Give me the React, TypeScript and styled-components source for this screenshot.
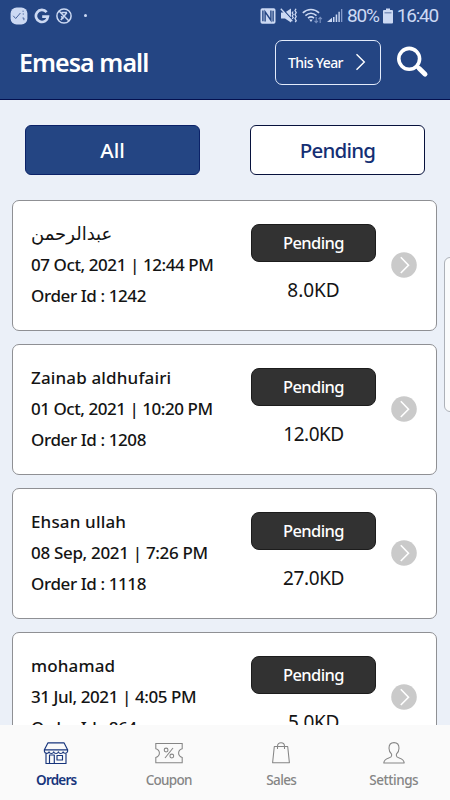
import React from "react";
import styled, { createGlobalStyle } from "styled-components";

const GlobalStyle = createGlobalStyle`
  * { box-sizing: border-box; }
  body { margin: 0; background: #ebf0f8; }
  button { font: inherit; margin: 0; padding: 0; }
`;

const Screen = styled.div`
  position: relative;
  width: 450px;
  height: 800px;
  display: flex;
  flex-direction: column;
  overflow: hidden;
  background: #ebf0f8;
  color: #141414;
  font-family: "Noto Sans", "DejaVu Sans", sans-serif;
  font-weight: 500;
`;

const Text = styled.span<{ $track?: number }>`
  white-space: nowrap;
  letter-spacing: ${(p) => p.$track ?? 0}px;
`;

const ArabicText = styled.span`
  font-family: "DejaVu Sans", sans-serif;
  font-size: 18px;
  font-weight: 400;
  white-space: nowrap;
`;

const Header = styled.header`
  flex: none;
  height: 100px;
  background: #244583;
  border-bottom: 1px solid #04104f;
  color: #fff;
`;

const StatusBar = styled.div`
  height: 31px;
  padding: 0 12px 0 10px;
  display: flex;
  align-items: center;
  justify-content: space-between;
  color: #ccd9f3;
  font-family: Roboto, sans-serif;
  font-weight: 400;
  font-size: 19px;
  line-height: 31px;
`;

const StatusGroup = styled.div`
  display: flex;
  align-items: center;
  svg { display: block; flex: none; }
`;

const TitleBar = styled.div`
  height: 62px;
  padding: 0 21px 0 19px;
  display: flex;
  align-items: center;
`;

const Title = styled.h1`
  flex: 1;
  margin: 0;
  font-size: 25px;
  font-weight: 600;
  line-height: 34px;
`;

const YearButton = styled.button`
  width: 106px;
  height: 45px;
  margin-right: 15px;
  padding: 0 14px 0 12px;
  display: flex;
  align-items: center;
  justify-content: space-between;
  border: 1px solid #e3ebfb;
  border-radius: 7px;
  background: transparent;
  color: #fff;
  font-size: 14px;
  font-weight: 500;
`;

const Tabs = styled.div`
  flex: none;
  height: 100px;
  padding: 25px 25px 0;
  display: flex;
  justify-content: space-between;
`;

const Tab = styled.button<{ $active?: boolean }>`
  width: 175px;
  height: 50px;
  border: 1px solid ${(p) => (p.$active ? "#0b2268" : "#07123d")};
  border-radius: 6px;
  background: ${(p) => (p.$active ? "#244583" : "#fff")};
  color: ${(p) => (p.$active ? "#fff" : "#142f74")};
  font-size: 20.5px;
  font-weight: 500;
  line-height: 48px;
`;

const OrderList = styled.main`
  flex: 1;
  min-height: 0;
  overflow: hidden;
  padding: 0 13px 0 12px;
`;

const Card = styled.article`
  height: 131px;
  margin-bottom: 13px;
  padding: 0 19px 0 18px;
  display: flex;
  border: 1px solid #8f9094;
  border-radius: 7px;
  background: #fff;
`;

const Details = styled.div`
  flex: 1;
  padding-top: 17px;
  display: flex;
  flex-direction: column;
  align-items: flex-start;
  font-size: 17px;
  line-height: 31.2px;
`;

const Amount = styled.div`
  width: 125px;
  margin-right: 15px;
  padding-top: 23px;
  display: flex;
  flex-direction: column;
  align-items: center;
  font-size: 19px;
  font-weight: 400;
  line-height: 30px;
`;

const Badge = styled.div`
  width: 125px;
  height: 38px;
  margin-bottom: 13px;
  border: 1px solid #1c1c1c;
  border-radius: 8px;
  background: #323232;
  color: #fff;
  text-align: center;
  font-size: 16.5px;
  font-weight: 500;
  line-height: 36px;
`;

const Open = styled.div`
  width: 26px;
  padding-bottom: 1px;
  display: flex;
  align-items: center;
`;

const BottomNav = styled.nav`
  flex: none;
  height: 75px;
  display: grid;
  grid-template-columns: repeat(4, 1fr);
  background: #fafafa;
`;

const NavItem = styled.div<{ $active?: boolean }>`
  padding-top: 16px;
  display: flex;
  flex-direction: column;
  align-items: center;
  gap: 5px;
  color: ${(p) => (p.$active ? "#17357c" : "#858585")};
  font-size: 13.5px;
  font-weight: ${(p) => (p.$active ? 600 : 500)};
  line-height: 20px;
  svg { display: block; }
`;

const EdgeHandle = styled.div`
  position: absolute;
  top: 257px;
  right: -8px;
  width: 14px;
  height: 155px;
  border: 1px solid #adb1b8;
  border-radius: 6px;
  background: #fafbfc;
`;

const AppNoticeIcon = () => (
  <svg width="18" height="18" viewBox="0 0 18 18">
    <rect x=".6" y=".6" width="16.8" height="16.8" rx="6" fill="#ccd9f3" />
    <path d="M3.2 8.8l2.5 2.7L10.4 6M12.5 4.2h1.2M12.7 7h1.2M12.5 11h1.4v2.2" fill="none" stroke="#47639d" strokeWidth="1" />
  </svg>
);

const GoogleIcon = () => (
  <svg width="16" height="16" viewBox="0 0 16 16">
    <path d="M12.6 4.2A6 6 0 1 0 13.9 8.6H8.2" fill="none" stroke="#ccd9f3" strokeWidth="2.7" />
  </svg>
);

const BlockedIcon = () => (
  <svg width="16" height="16" viewBox="0 0 16 16" fill="none" stroke="#ccd9f3" strokeWidth="1.5">
    <circle cx="8" cy="8" r="7.1" />
    <path d="M3 3l10 10M11 4.6L4.8 12M5.5 4.600h5.5M5.2 8.2l2.2 2.6" />
  </svg>
);

const NfcIcon = () => (
  <svg width="16" height="16" viewBox="0 0 16 16">
    <rect x=".5" y=".3" width="15" height="15.4" rx="1.8" fill="#ccd9f3" />
    <path d="M5.1 13.500V3.800l5.800 8.400V2.500M2.900 2.500v10.800M13.100 2.700v10.800" fill="none" stroke="#244583" strokeWidth="1.4" />
  </svg>
);

const MuteIcon = () => (
  <svg width="18" height="17" viewBox="0 0 18 17" fill="none" stroke="#ccd9f3">
    <path d="M1 5.500h4L11 1.500v14L5 11.500H1z" fill="#ccd9f3" stroke="none" />
    <path d="M1.800 1.200l10.500 11.500" stroke="#244583" strokeWidth="1.300" />
    <path d="M.8 1.800l11.500 12.500" strokeWidth="1.300" />
    <path d="M13.200 4.500l-1 1.500 1 1.500-1 1.500 1 1.500-1 1.500M16 1.800l-1 1.800 1.200 2-1.200 2 1.200 2-1.200 2 1.200 2-1 1.400" strokeWidth="1.300" />
  </svg>
);

const WifiIcon = () => (
  <svg width="21" height="16" viewBox="0 0 21 16" fill="none" stroke="#ccd9f3" strokeWidth="1.6">
    <path d="M.8 4.8c4.8-4.4 11.5-4.4 16.3 0M3.4 7.6c3.5-3 7.6-3 11.1 0M6 10.2c1.9-1.6 4.1-1.6 6 0" />
    <path d="M7.2 11.5h3.5L9 14z" fill="#ccd9f3" stroke="none" />
    <path d="M14.2 9v5.5M12.5 12.8l1.7 1.8 1.7-1.8M18.2 15V9.4M16.5 11.2l1.7-1.8 1.7 1.8" stroke="#7890c0" strokeWidth="1.1" />
  </svg>
);

const SignalIcon = () => (
  <svg width="16" height="15" viewBox="0 0 16 15">
    <path d="M0 14l5-4.2V14z" fill="#ccd9f3" />
    <path d="M6 14V9h1.5v5zM8.7 14V6.5h1.5V14z" fill="#ccd9f3" />
    <path d="M11.4 14V3.8h1.4V14z" fill="#ccd9f3" />
    <path d="M14 14V1h1.3v13z" fill="#849bcb" />
  </svg>
);

const BatteryIcon = () => (
  <svg width="10" height="16" viewBox="0 0 10 16">
    <path d="M3 .5h4V2h2q1 0 1 1v11.5q0 1-1 1H1q-1 0-1-1V3q0-1 1-1h2z" fill="#ccd9f3" />
    <path d="M1.5 4.8h7" stroke="#6d84b2" strokeWidth="1.2" />
  </svg>
);

const YearChevron = () => (
  <svg width="11" height="18" viewBox="0 0 11 18">
    <path d="M1.5 1.2L9.3 9l-7.8 7.8" fill="none" stroke="#fff" strokeWidth="1.4" />
  </svg>
);

const SearchIcon = () => (
  <svg width="33" height="32" viewBox="0 0 33 32" fill="none" stroke="#fff">
    <circle cx="13.2" cy="12.8" r="10.4" strokeWidth="3.6" />
    <path d="M20.8 20.2l3 2.8" strokeWidth="4" />
    <path d="M23.5 22.8l5.6 5.4" strokeWidth="4.8" strokeLinecap="round" />
  </svg>
);

const OpenIcon = () => (
  <svg width="26" height="26" viewBox="0 0 26 26">
    <circle cx="13" cy="13" r="12.8" fill="#cacaca" />
    <path d="M9.8 5.3l7.7 7.9-7.7 7.8" fill="none" stroke="#fff" strokeWidth="1.6" />
  </svg>
);

const StoreIcon = () => (
  <svg width="26" height="24" viewBox="0 0 26 24" fill="none" stroke="currentColor" strokeWidth="1.15" strokeLinejoin="round">
    <path d="M5 1.8h16l3.6 7H1.4zM3 12.5V22.500h20V12.5" />
    <path d="M1.4 8.8v1.6a2.4 2.4 0 0 0 4.6.5 2.5 2.5 0 0 0 4.7 0 2.5 2.5 0 0 0 4.7 0 2.5 2.5 0 0 0 4.7 0 2.4 2.4 0 0 0 4.5-.5V8.8" />
    <path d="M6.5 22.500v-8.500h4.8v8.500M14 14.5h5.5V19H14z" />
  </svg>
);

const CouponIcon = () => (
  <svg width="28" height="24" viewBox="0 0 28 24" fill="none" stroke="currentColor" strokeWidth="1.05">
    <path d="M.8 2.5h26.4v5.2c-2.3.7-3.6 2.2-3.6 4.4s1.3 3.7 3.6 4.4v5.2H.8v-5.2c2.3-.7 3.6-2.2 3.6-4.4S3.1 8.4.8 7.7z" />
    <path d="M18 7l-8 10" />
    <circle cx="11.1" cy="9" r="1.9" />
    <circle cx="16.8" cy="15" r="1.9" />
  </svg>
);

const BagIcon = () => (
  <svg width="20" height="24" viewBox="0 0 20 24" fill="none" stroke="currentColor" strokeWidth="1.05" strokeLinejoin="round">
    <path d="M3.3 5.500h13.4l1.7 16.200H1.6z" />
    <path d="M6.5 8V5.2a3.5 3.5 0 0 1 7 0V8" />
  </svg>
);

const PersonIcon = () => (
  <svg width="22" height="24" viewBox="0 0 22 24" fill="none" stroke="currentColor" strokeWidth="1.05" strokeLinejoin="round">
    <path d="M8.6 13.2C7 11.8 6 9.5 6 7.200 6 3.700 8 1.600 11 1.600s5 2.100 5 5.600c0 2.300-1 4.600-2.600 6v1.500c0 1.200 1 1.700 2.800 2.200 3.300 1 4.800 1.800 5 5H.8c.2-3.200 1.700-4 5-5 1.800-.5 2.800-1 2.800-2.200z" />
  </svg>
);

type Order = {
  name: string;
  arabic?: boolean;
  date: string;
  dateTrack: number;
  id: string;
  price: string;
  priceTrack: number;
};

const orders: Order[] = [
  { name: "عبدالرحمن", arabic: true, date: "07 Oct, 2021 | 12:44 PM", dateTrack: -0.42, id: "1242", price: "8.0KD", priceTrack: 0 },
  { name: "Zainab aldhufairi", date: "01 Oct, 2021 | 10:20 PM", dateTrack: -0.46, id: "1208", price: "12.0KD", priceTrack: -0.5 },
  { name: "Ehsan ullah", date: "08 Sep, 2021 | 7:26 PM", dateTrack: -0.32, id: "1118", price: "27.0KD", priceTrack: -0.4 },
  { name: "mohamad", date: "31 Jul, 2021 | 4:05 PM", dateTrack: -0.42, id: "864", price: "5.0KD", priceTrack: -0.3 },
];

const navItems = [
  { label: "Orders", icon: <StoreIcon />, track: -0.8, active: true },
  { label: "Coupon", icon: <CouponIcon />, track: -0.7 },
  { label: "Sales", icon: <BagIcon />, track: -0.6 },
  { label: "Settings", icon: <PersonIcon />, track: -0.45 },
];

const LeftStatus = styled(StatusGroup)`
  gap: 6px;
`;

const Dot = styled.i`
  width: 3px;
  height: 3px;
  margin-left: 6px;
  border-radius: 50%;
  background: #ccd9f3;
`;

const RightStatus = styled(StatusGroup)`
  gap: 4px;
`;

export default function App() {
  return (
    <Screen>
      <GlobalStyle />
      <Header>
        <StatusBar>
          <LeftStatus>
            <AppNoticeIcon />
            <GoogleIcon />
            <BlockedIcon />
            <Dot />
          </LeftStatus>
          <RightStatus>
            <NfcIcon />
            <MuteIcon />
            <WifiIcon />
            <SignalIcon />
            <Text $track={-1.2}>80%</Text>
            <BatteryIcon />
            <Text $track={-1.2}>16:40</Text>
          </RightStatus>
        </StatusBar>
        <TitleBar>
          <Title><Text $track={-0.95}>Emesa mall</Text></Title>
          <YearButton><Text $track={-0.6}>This Year</Text><YearChevron /></YearButton>
          <SearchIcon />
        </TitleBar>
      </Header>
      <Tabs>
        <Tab $active><Text>All</Text></Tab>
        <Tab><Text $track={-0.8}>Pending</Text></Tab>
      </Tabs>
      <OrderList>
        {orders.map((o) => (
          <Card key={o.id}>
            <Details>
              {o.arabic ? <ArabicText>{o.name}</ArabicText> : <Text $track={0.15}>{o.name}</Text>}
              <Text $track={o.dateTrack}>{o.date}</Text>
              <Text $track={-0.4}>Order Id : {o.id}</Text>
            </Details>
            <Amount>
              <Badge><Text $track={-0.6}>Pending</Text></Badge>
              <Text $track={o.priceTrack}>{o.price}</Text>
            </Amount>
            <Open><OpenIcon /></Open>
          </Card>
        ))}
      </OrderList>
      <BottomNav>
        {navItems.map((n) => (
          <NavItem key={n.label} $active={n.active}>
            {n.icon}
            <Text $track={n.track}>{n.label}</Text>
          </NavItem>
        ))}
      </BottomNav>
      <EdgeHandle />
    </Screen>
  );
}
